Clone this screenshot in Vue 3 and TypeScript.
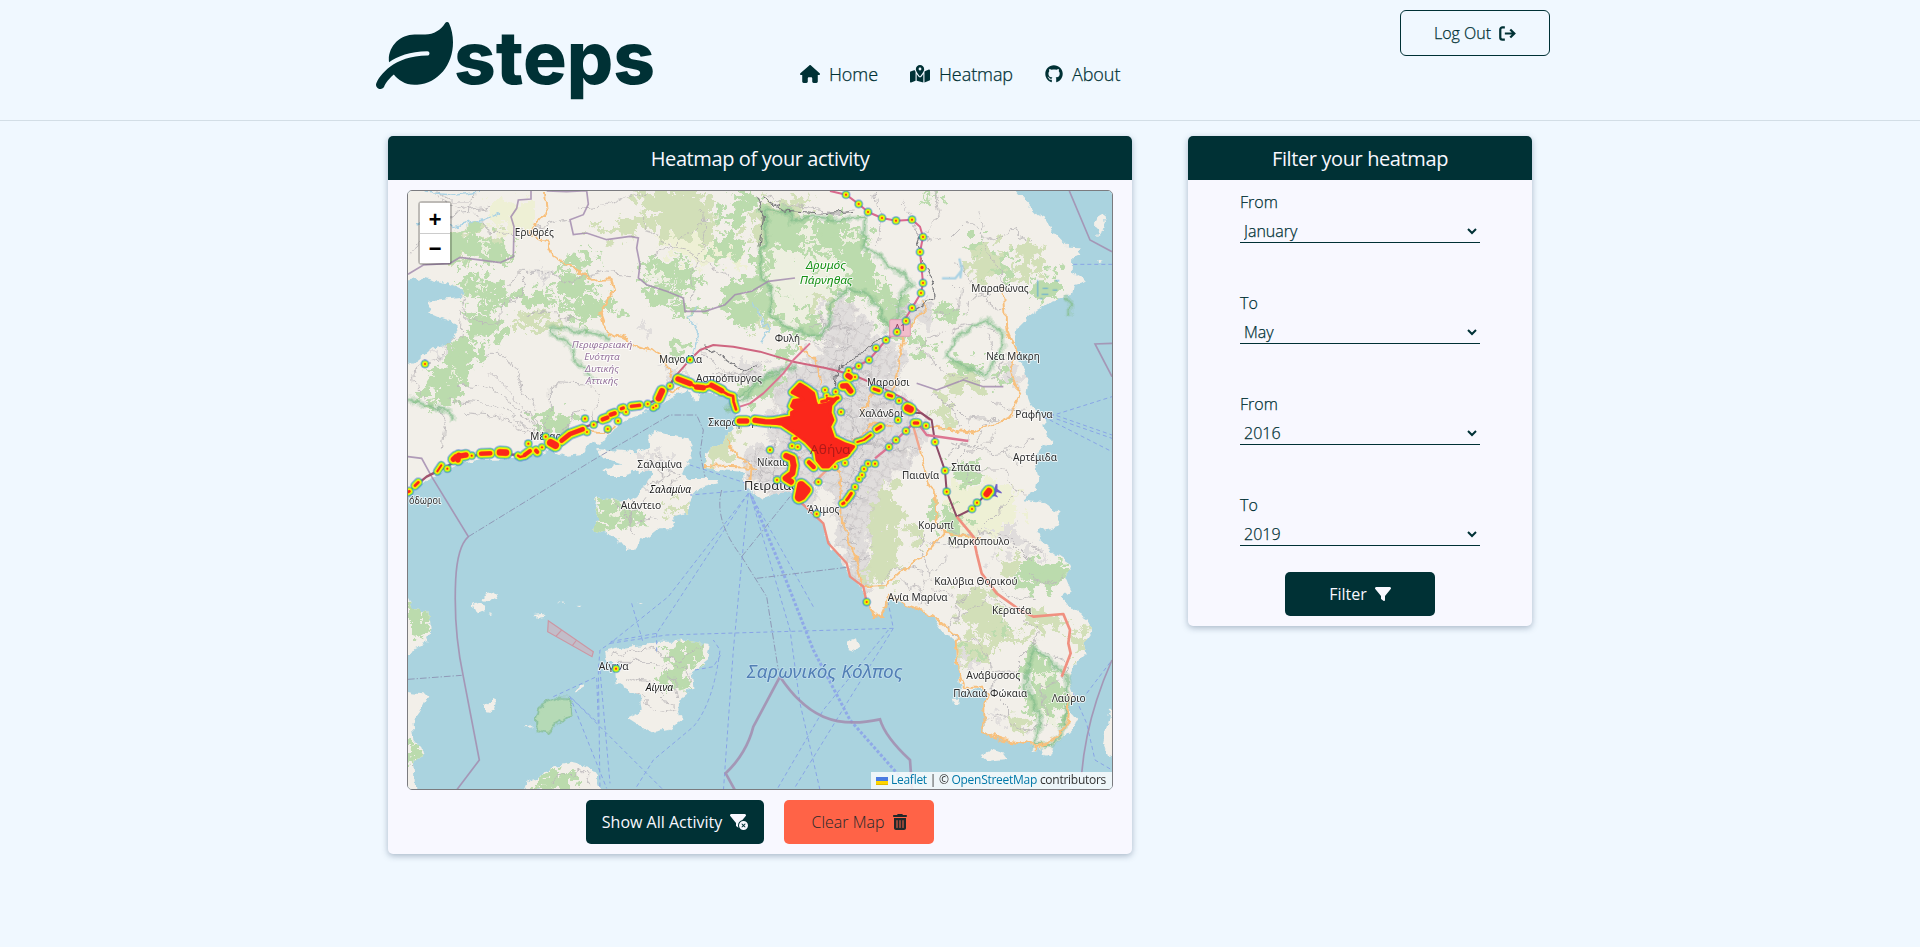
<script setup lang="ts">
import { ref } from 'vue'

interface Heat { d: string; w: number; fill?: boolean }
interface Place { t: string; x: number; y: number; w: number; s?: number; c?: string }

const months = ['January', 'February', 'March', 'April', 'May', 'June', 'July', 'August', 'September', 'October', 'November', 'December']
const years = ['2015', '2016', '2017', '2018', '2019', '2020']
const filters = ref([
  { label: 'From', value: 'January', options: months },
  { label: 'To', value: 'May', options: months },
  { label: 'From', value: '2016', options: years },
  { label: 'To', value: '2019', options: years },
])

/* Map units: three per screen pixel. */
const mainland = 'M60 160H1890L1910 183 1945 225 1972 255 2000 270 2025 310 2050 335 2065 350 2105 352 2100 375 2080 385 2078 420 2090 440 2118 455 2085 465 2078 495 2055 500 2010 515 1975 540 1940 565 1910 595 1903 630 1910 680 1930 715 1945 750 1940 790 1955 830 1990 865 2000 915 2015 935 1985 955 1965 980 1975 1050 1970 1080 1925 1110 1990 1120 2035 1150 2040 1185 1970 1205 1980 1230 2025 1270 2070 1300 2055 1345 2070 1380 2045 1400 2080 1440 2128 1470 2130 1510 2110 1540 2120 1570 2080 1610 2065 1650 2080 1690 2070 1740 2095 1770 2075 1800 2040 1825 2010 1850 1960 1860 1940 1840 1870 1830 1815 1810 1810 1720 1825 1680 1790 1675 1745 1685 1730 1600 1730 1530 1700 1520 1660 1460 1610 1435 1580 1425 1525 1410 1505 1455 1480 1458 1455 1410 1450 1370 1405 1335 1395 1305 1350 1250 1330 1190 1305 1155 1260 1115 1230 1085 1190 1090 1150 1110 1100 1075 1090 1050 1090 1025 1020 1020 975 1010 975 970 1025 940 1060 885 1070 850 1055 810 1020 795 965 788 948 812 920 785 870 800 830 830 780 855 740 870 700 895 660 945 630 935 605 975 560 980 510 960 460 980 400 985 310 987 240 1000 190 1025 140 1050 110 1070 60 1095V715L120 690 160 655 215 640 235 600 232 580 185 565 150 550 160 535 145 512 240 500 252 485 200 460 130 443 60 455Z'

const islands = [
  /* Salamis */
  'M805 915L825 903 870 915 925 930 940 960 915 1010 905 1035 930 1050 1010 1050 1015 1060 955 1075 935 1095 925 1150 870 1165 885 1180 880 1195 835 1195 810 1215 780 1230 770 1255 740 1260 720 1235 700 1220 640 1200 645 1180 660 1165 645 1140 650 1100 700 1112 750 1110 785 1090 800 1060 820 1030 790 1020 735 1035 685 1035 670 1020 730 1005 670 985 645 960 720 965 770 970 810 945Z',
  /* Aegina */
  'M675 1565L720 1555 790 1545 840 1535 920 1535 992 1545 985 1590 960 1610 935 1630 940 1670 900 1700 895 1735 905 1770 865 1800 815 1810 785 1790 745 1765 785 1745 780 1700 745 1680 710 1660 705 1620 720 1605 680 1590Z',
  'M430 1980L440 1955 470 1945 490 1920 530 1910 580 1900 625 1910 650 1945 665 1985Z',
  'M60 1400L85 1405 100 1440 145 1445 150 1510 140 1540 110 1550 90 1575 60 1575Z',
  'M60 1680L100 1690 145 1695 120 1745 95 1780 100 1830 125 1860 130 1880 100 1890 105 1930 110 1990 60 1990Z',
  'M315 1395l35-5 5 10-25 15-20-5zM278 1425l20-8 20 8-8 20-20 5zM322 1455l12-2-4 5zM460 1455l25-3 12 8-25 4zM315 1730l25-20 10 5-5 20-15 8-15-3zM585 1680l20-14 3 8-20 12zM438 1790l16-6v9zM770 1418l25 3-10 4zM590 1428l14-1-5 5zM538 1417l12 1-4 4z',
  'M2155 260l18-10 5 30-10 20-20 15 5-20-12-8 12-10zM2152 388l14 5-12 5z',
  'M1405 1530l25-8 8 30-15 12-20-8zM1715 1700l22 0-2 20-15 0zM1805 1875l35-15 25 10 15 20-50 5zM2020 1330l22 5-5 20-20-2zM1990 1855l30-5-10 25-14-2zM2190 1740l15-5v150l-20-10-15-40z',
]

const scrub = [
  'M760 183H1000L985 240 1010 290 960 330 880 330 850 310 830 270 790 270Z', 'M630 295l80-10 50-25 40 0-10 40-100 30z',
  'M225 300l90-10 80 40-10 50-120 20-40-30z', 'M150 340l90-5 60 40-20 20-110-15z', 'M380 575l60-15 90 5 20 15-60 20-90 0z',
  'M1140 210l130-10 30 25-60 40-90-20z', 'M1110 260h80l20 60-60 30-50-20z', 'M1140 490l150-20 60 40-70 60-80-20z',
  'M1780 360l80-15 20 50-40 60-80-20zM1915 350l60-10 15 50-50 60-40-20z', 'M1690 745l70-20 60 20-30 40-70 0z',
  'M1680 790h35l5 50-20 55-25-30z', 'M1470 1080l70-20 20 90-15 160-40 70-50-10 25-130-50-60z', 'M1420 1030l70-10 60 80-50 60-60-30z',
  'M1560 1175l30-5 50 40-20 30-45-10z', 'M1740 1400l50-30 100 60-30 70 80 10 25 30-50 10-120-30-50-40z', 'M1735 1530l110 5-20 60-50 20-45-20z',
  'M1870 1285l25-10 25 15-8 45-30 15-15-25z', 'M1895 1750l35 5 10 40-30 30-15-30z', 'M1930 1450l90-5 55 30-40 25-100-10z',
  'M1060 470l120-10 20 80-60 60-90-50z', 'M970 920l90-20 10 40-30 50-60 30z', 'M865 1120l70-15 0 45-60 5z', 'M2070 1510l50-20 5 70-45 20z',
]

const woods = [
  'M200 310l90-15 100 50-10 50-100 5-90-30z', 'M220 445l90-15 70 50 5 30-80 0-70-30z', 'M360 490l120-15 60 25-20 30-110-5z',
  'M520 440l40-20 50 30 70 20-60 20-80-5z', 'M540 510l90-15 90 30-40 25-100-10z', 'M260 520l70-15 40 30-60 20zM250 570l70-20 60 50-20 40-70-15z',
  'M190 640l70-15 60 30-20 30-100 10z', 'M230 680l30-10 5 60-30 80-60 20-50-10 40-100z', 'M84 600l40-10 30 30-60 20z',
  'M540 400l60-15 50 20-40 30zM575 370l30-5 20 30-30 10zM640 370l50-10-10 30zM520 530l50 40 70 10-20-40z', 'M770 410l80-20 90 20 30 60-60 15-70-25z',
  'M780 460l60 0 70 40-20 25-80-15z', 'M850 640l60-10 20 30-50 10zM860 540l80-20 50 20-60 20z', 'M1000 250l60-20 50 10-30 40-70 10z',
  'M990 330l50-20 60 30-30 40-60 10z', 'M1030 470l90-40 60 50-10 60-70 60-80-50z', 'M1050 190l60-10 20 60-50 10z',
  'M465 850h120l-10 50-50 30-60-30z', 'M1150 240l80-5 60 40 60-10 110 20 0 80 20 40 60 80 60 20 5 90-40 30-60-20-10-70-60-50-60 20-100-60-70 30-60-60z',
  'M1130 350l60-15 50 50-20 60 70 70-20 40-60-30-80-50z', 'M1150 530l100-5 80 60-10 40-90-10-60-50z', 'M1350 270l100 5 20 60-60 20-70-20z',
  'M1200 440l50 30 60 0-30 50-50-10z', 'M1960 440l70-10 20 60-90 30z', 'M1590 620l60 5 20 40-70 0z', 'M1650 550l60-25 30 30-50 30zM1780 330l40 0 0 30-40 10zM1620 190l60 5-20 20z',
  'M1690 700l60-20 60 30-60 20z', 'M1840 740l40-10 5 30-50 5z', 'M1850 380l30-10 20 60-50 10z', 'M1930 1290l70 10 60-10 10 60-60 20-90-20z', 'M1900 1340l70 20 60-5-20 20-100 0z',
  'M1935 1580l50-25 20 60 40 40 20 60-20 50-50-10-30 30-30-70 10-60z', 'M1960 1680l40-5 20 30-40 20z', 'M1840 1470l30-3 10 30-20 10z', 'M1750 1560l50 0-20 25z',
  'M1300 1290l15-30 20 10-20 30z', 'M1710 1010l80-10 10 50-80 15z', 'M1650 1120l60 10 60 50-40 30-60-10z', 'M1190 640l60 10-20 40-50-10z', 'M1090 740l90-20 40 20-60 60-80 15z',
  /* islands */
  'M650 1115l70-5 30 20 20 30 20 30-50 10-30-20-30 30-45 0 20-50z', 'M840 1550l70-10 70 5-10 50-60 30 10 40-50-10-40-40 60-20z', 'M850 1640l50 0 20 30-50 20z', 'M500 1920l80-15 10 50-20 30-110 0z', 'M84 1420l40 10 20 80-30 20-30-20z', 'M84 1830l40 30-10 60-30-10z', 'M2125 1330l6-10zM700 1760l20-14 5 10-25 20z',
]

/* Open ground between the woods. */
const clearings = [
  'M1180 350l60 10 60 60 60-10 60 30-20 40-60-10-50 50-70-20-60-60z', 'M1250 290l60 5 20 30-60 10z', 'M1180 480l60 30 50 50-30 30-60-20-40-50z', 'M1380 310l50 0 20 30-50 10z', 'M1480 440l30 20 10 40-30-10z', 'M1270 350l80 10 40 50-60 10z',
  'M270 330l60 5 20 20-50 5zM270 460l40 5 10 20-40 0zM220 725l20 0-20 40z', 'M800 420l40 0 20 30-30 5zM1080 480l40 10-10 40-40-10z', 'M1960 1620l40 0 10 40-40 10zM1990 1720l30 20-10 40-30-10z', 'M690 1150l30-15 20 20-20 20z',
]

const farmland = [
  'M330 220l80-10 60 20-20 60-70 30-50-40z', 'M830 320l100-10 110 50-60 50-80-20z', 'M1680 1140l130-90 80 10 50 90-110 90-90-20z', 'M1690 1060l60-10 20 40-60 30z', 'M1020 355l60-10 20 40-50 20z',
]

const urban = [
  'M1340 520l70-10 40 60 60 60 50 20 20 60-60 60-50 20-70-20-60-60-10-90z', 'M1200 720l160-50 120 20 80 90 40 70 20 90-40 70-80 60-30 90 20 100-80-60-50-80-60-100-80-60-60-60z',
  'M1090 960l140-30 80 60 0 120-120 0-90-40z', 'M1370 1150l50 10 40 120 10 110-60-60-40-90z', 'M1540 520l120-5-10 60-70 20z', 'M1090 690l80 10 10 40-90 20z',
  'M780 960l70 10 20 40-60 10zM470 425l50 10-10 20-50-5zM850 700l40 5 20 50-40-20zM780 590l25-10 8 20-20 15z', 'M1860 700l50 0 20 50-50 5z',
  'M1820 1200l100 0 50 60 30 20-80-10-70-40z', 'M1830 1280l30-5-10 20-25-5z', 'M140 670l60-30 10 30-50 15zM1740 1590l60-10 10 30-60 10zM1820 1745l50 20-20 10z', 'M1610 850l60 30-30 40-50-30z',
]

const thinRoads = [
  'M84 370l60-50 50-60 80-10 5-70M280 240l60 80 60-10 50-20M160 200l80 40 90-20', 'M470 290l80-20 20-10', 'M600 240l70-10 70-30 60-10', 'M780 260l60 80 80 20 90 60 50 20M960 240l10 60-10 80-20 60-15 80M820 380l60-20 50-60 50-40',
  'M370 470l60-40 90 0 60 30 90-30 80 10M440 450l-20 60-60 10 0 60-100-5M260 575l-10-60-20-30M440 550l80 0 80 20', 'M245 550l-5 60-60 50-80 60 10 60 60 50 30 60-10 60', 'M330 730l40 40 60 60 70 90M240 760l80 5 60 50 80 60 40 40M200 810l120 10 120 60 50 40M505 920V770l30-15 90 5 30 40-20 50-10 50M560 900l20-40 40-20M250 850l100 10 80 30 50 30M330 690l0-20 40 0 50 80 70 160',
  'M970 650l60 70 40 20 60-10M1020 740l100 0 20-50', 'M1150 190l60 40 160 15 60-5', 'M1480 183l20 60-10 100M1600 280l30 30 40-40-10-60 40-60M1700 340l60-60 80 40 60-20 60 30M1800 250l20 100 60 120M1570 210l50 100 60 20M1870 540l-80-60-60-80M1870 470l-90 30-20 60M1700 440l40 40-10 60-60 10M1860 620l-80-40-60 20',
  'M1620 660l90 80 80 20 60-20 30-60M1700 800l60 60 100 10M1770 860v80l-60 20M1830 860l-40 80-60 60 40 60M1660 790l60 40 20 60M1850 900l-60 60-80-30M1960 930l-90 30-100 10M1870 960l60 60M1780 1020l100 0 40 80M1900 1090l-50 60-60 60-80 0',
  'M1640 1200l-20 60 30 80 80 30M1790 1200l100 30 60 60M1610 1210l60 40 90 0M1700 1280l-60 60-20 80M1730 1480l10-60 40-60 40-10M1830 1340l60 50 60 20M1920 1430l-40 0-60-20-40 20-60 40-20 30M1700 1490l30 30 60 10 40 40 20 60-20 60M1920 1470l50 40-10 40-60 60-50 10M1840 1600l-10 80 60 60-60 20M1660 1370l60 30M1560 1340l60 40 20 50M1500 1350l60-40 60 20M2000 1560l60 30-20 60-50 20 10 80M1900 1780l40 20 60-20',
  'M1280 720l120-10 100 40M1280 740l60 180 60 40M1340 700l60 160M1240 720l60 120 100 20 100-20M1310 780l180 50 80-10M1390 820l60 110 80 30 90-10M1440 760l-30 100 10 140-20 100M1510 780l-60 130-60 90M1560 860l-90 70-40 90M1350 900l120 40 80-10M1380 1000l70 30-10 60-50 80M1360 1060l50 0 40 60M1380 1120l60 10M1370 1190l60 10M1390 1240l50 0M1400 1290l60-10',
  'M1310 540l20 80 60 30M1340 580l80 20 60-30M1360 660l70-20M1350 530l60 80-20 60M1290 600l100-20M1270 640l90 10',
  'M1100 980l160 30M1130 950l20 140M1100 1020l110 20M1180 950l0 130M1210 950l20 130M1110 1060l120-10', 'M780 930l60 50 60 70M770 1080l60 0 70-20M800 1060l80-30M800 990l70 50M690 1110l60 50 50-60M760 1110l-10 100M830 1170l-60 10',
  'M700 1580l100-30 100 40 70-50M720 1600l90 0 100 20 20 40M730 1640l80 20 70 80M820 1600l60 50 10 60M770 1700l60 40 60 10', 'M540 1940l60-20 30 40M520 1980l20-40', 'M84 1920l60 60', 'M1060 870l60-10M1000 730l120 5M1030 760l80-40', 'M160 183l60 30 50 0M500 450l10-10', 'M1700 600l-90 60M1920 750l-60-30-30-90', 'M1930 830l-60 10-40-30', 'M1950 1330l40 30 60-30M1930 1240l60 20',
]

const orangeRoads = [
  'M495 183L500 250 470 285 445 300 470 325 500 335 520 375 580 415 635 452 690 448 700 480 680 515 660 555 680 612 730 625 770 645 815 660 850 690 880 740', 'M885 740L870 790 910 770 940 775',
  'M700 885L680 910 620 905', 'M1040 930L1075 980 1115 1010 1110 1060M975 1005L1110 1010 1130 1020', 'M1870 470L1880 600 1905 660 1895 720 1920 800 1890 860 1780 910 1660 893 1600 885', 'M1375 1000L1390 1180 1430 1290 1450 1368 1520 1365 1580 1310 1640 1270 1690 1205 1800 1225', 'M1620 960L1635 1020 1665 1090 1670 1170 1690 1205', 'M1260 655L1310 690 1325 770', 'M1630 510l5 40-60 50-20 100-20 110M1440 860l50-80M1420 940l60-60 60 10', 'M1450 1390L1480 1458 1505 1455 1530 1400 1580 1425 1610 1435 1660 1460 1730 1520 1735 1620 1750 1670 1810 1670 1825 1700 1810 1720V1810L1870 1830 1940 1840 1970 1855 2030 1820 2065 1770 2068 1700',
]

const motorways = [
  { d: 'M1350 183L1398 194 1436 222 1464 246 1506 264 1548 272 1596 269 1620 290 1629 321 1620 366 1629 459 1623 489 1596 534 1551 606 1518 630 1467 690 1406 722', c: '#d9688c', w: 6 },
  { d: 'M885 740L930 689 960 660 1000 645 1060 650 1140 665 1240 695 1340 715 1420 735 1500 770 1570 805 1650 870', c: '#cf6580', w: 6 },
  { d: 'M1290 640L1240 690 1210 730 1150 790 1110 820 1080 830', c: '#dc7592', w: 6 },
  { d: 'M84 1085L140 1040 200 1010 240 985 320 970 420 975 500 950 560 910 640 882 720 845 800 822 850 800 885 740', c: '#a0536e', w: 7 },
  { d: 'M1575 845L1625 850 1655 870 1665 936 1695 1022 1700 1085 1730 1160 1776 1137 1820 1090', c: '#8d4b66', w: 6 },
  { d: 'M1606 870L1640 915 1765 933M1485 985L1527 951 1600 880', c: '#dc7592', w: 7 },
  { d: 'M1730 1160L1780 1220 1790 1270 1805 1330 1850 1390 1920 1440 1960 1460 2050 1452 2070 1500 2065 1540 2072 1570 2045 1640', c: '#f09080', w: 8 },
  { d: 'M1260 1115L1330 1180 1345 1240 1400 1300 1410 1340 1450 1370 1460 1416', c: '#ee8d7f', w: 7 },
  { d: 'M1600 890L1620 960M1300 1060L1350 1010M1260 980L1230 1010', c: '#f1a48c', w: 7 },
]

const reserves = [
  'M1155 240L1235 245 1230 275 1300 260 1360 270 1455 265 1450 350 1490 370 1540 420 1575 430 1595 465 1560 490 1560 560 1520 590 1500 540 1460 490 1400 480 1350 520 1350 580 1310 620 1220 590 1170 550 1180 500 1140 420 1140 370 1160 330Z',
  'M1700 680L1730 620 1780 590 1820 570 1870 610 1870 650 1840 700 1820 735 1780 720 1740 700Z',
  'M1965 1555L2000 1580 2060 1640 2065 1720 2045 1810 2010 1845 1960 1845 1980 1780 1965 1720 1940 1680 1945 1600Z',
  'M505 600L520 590 600 605 650 610 690 630M505 600l70 50 10 40 60 60M84 805l50 20 80 20 5 30', 'M1030 840l60-30 80-80 80-20M1080 800l60-50 60-20', 'M2055 500l15 20-2 40',
]

const boundaries = [
  'M453 183V207L415 210 410 235 393 260 402 290 400 380 360 398 240 382 210 400 130 405 84 433', 'M500 183l60 2 60-3 5 40-15 32-40 15 10 45 40-5 60 20 70-10 25 5-5 30 10 50-5 40 25 20 60 20 50 20 5 40h60l60-20 30-30 50-10 50-30 80-10',
  'M84 980L125 985 155 1040 265 1220Q232 1250 227 1350Q220 1500 250 1640L298 1890 230 1980', 'M2068 183L2130 330 2196 365', 'M2196 640L2145 642 2196 740', 'M2196 1590Q2120 1760 2105 1930', 'M1670 780l80-30 60 20 60 0M1670 780l-60-20',
]
const ferries = [
  'M1105 1090L865 1400 690 1540 660 1560 655 1620 660 1985M1105 1090L830 1510 690 1535M1105 1090L1060 1560 1030 1985', 'M1110 1090L1230 1500 1260 1720 1320 1980M1110 1090L1300 1430', 'M690 1540L860 1515 1540 1495 1525 1420M1540 1495L1400 1720 1240 1980M1525 1500L1330 1740 1190 1980', 'M520 1700L650 1640 655 1780 570 1700 680 1975M570 1700L850 1980M660 1620L690 1960', 'M770 1970L820 1890 940 1790Q1000 1720 1020 1560L1000 1530M945 1620L1000 1610 1025 1570', 'M755 1420L790 1540M830 1510V1570M1105 1080L930 1095M1100 1060L930 1005', 'M2080 403H2196M1990 865L2196 800M2010 850L2196 915M2010 860L2196 925M1990 860L2196 965', 'M2080 1690L2120 1780 2145 1890 2196 1920M2120 1690L2196 1590',
]
const seaLines = ['M265 1220L640 990 760 920 870 855 950 855 970 900 960 970 975 1040', 'M84 1648L245 1636', 'M1025 1080Q1000 1170 1085 1280L1160 1400 1195 1620', 'M1085 1280L1230 1100M1130 1345L1400 1312']

const dots: number[][] = [
  [135, 702], [930, 689], [870, 768], [615, 866], [641, 884], [714, 873], [683, 897], [738, 846], [803, 822], [445, 941], [497, 920], [486, 952], [621, 906], [470, 965], [820, 833], [275, 977], [202, 1016],
  [1398, 194], [1436, 222], [1464, 246], [1506, 264], [1548, 272], [1596, 269], [1629, 321], [1620, 366], [1629, 459], [1623, 489], [1596, 534], [1578, 573], [1551, 606], [1518, 630], [1488, 654], [1467, 690], [1436, 708], [1406, 722], [1425, 741],
  [1557, 812], [1383, 846], [1554, 870], [1638, 887], [1665, 936], [1578, 903], [1548, 930], [1527, 951], [1170, 960], [1236, 948], [1253, 951], [1335, 780], [1340, 797], [1367, 785],
  [1485, 1001], [1464, 1001], [1452, 1017], [1446, 1035], [1437, 1047], [1425, 1071], [1395, 999], [1315, 1056], [1191, 1050], [1310, 1152], [1695, 1022], [1700, 1085], [1791, 1118], [1776, 1137], [1460, 1416], [708, 1616], [1365, 1010],
]
const heat: Heat[] = [
  { d: 'M84 1086l4-2M105 1067l10-10', w: 7 }, { d: 'M172 1024l12-18', w: 5 }, { d: 'M220 988l8-8 30-5M236 976l-2 14', w: 15 }, { d: 'M303 971l28-1', w: 12 }, { d: 'M360 967l18 1', w: 19 }, { d: 'M414 977l6 4 15-4', w: 6 }, { d: 'M434 975l16-12M468 962l4 4', w: 11 },
  { d: 'M512 938l14 8', w: 21 }, { d: 'M545 932l25-20 38-14', w: 13 }, { d: 'M668 868l14-5M692 854l12-4', w: 12 }, { d: 'M724 836l6-2M754 829l25-3', w: 9 }, { d: 'M836 805l10-22', w: 17 }, { d: 'M828 828l0 0', w: 5 },
  { d: 'M894 747l36 14M950 771l20 2M995 766l30 16', w: 15 }, { d: 'M930 761l20 10M970 773l25-7M1025 782l20 12 14 4 2 18 7 22', w: 7 }, { d: 'M1078 873h22M1125 871l30 4 50 2', w: 15 },
  { d: 'M1237 787L1260 763 1280 775 1300 790 1306 815 1311 828 1340 822 1370 804 1352 825 1350 848 1358 870 1348 890 1360 925 1395 942 1420 950 1400 975 1366 988 1345 1010 1328 1010 1312 990 1308 965 1280 935 1240 905 1205 882 1175 878 1175 873 1235 862 1235 848 1250 840 1235 828 1242 812 1270 808 1262 800Z', w: 9, fill: true },
  { d: 'M1325 815l15-3M1342 806l22 2 10-4', w: 8 }, { d: 'M1404 737l6 4M1388 768l12-1 12 16', w: 15 }, { d: 'M1482 777l15 5M1525 795l10 3', w: 8 }, { d: 'M1583 834l8 4', w: 20 }, { d: 'M1603 879h10', w: 9 }, { d: 'M1432 936l20-6 20-15', w: 5 }, { d: 'M1490 898l12-8', w: 9 }, { d: 'M1626 412v1', w: 8 }, { d: 'M1243 926l6-2', w: 7 },
  { d: 'M1219 978l18 8 4 20-4 24-20 15 16 10', w: 17 }, { d: 'M1287 997l14 14', w: 12 }, { d: 'M1264 1066l15 14-14 18-8 4z', w: 24, fill: true }, { d: 'M1388 1121l4-2M1400 1110l6-8 8-12', w: 8 }, { d: 'M1820 1092l7-9', w: 18 },
  ...dots.map(([x, y]) => ({ d: `M${x} ${y}h.1`, w: 5 })),
]
const layers = [
  { grow: 23, color: '#3b62d8', opacity: 0.38 },
  { grow: 18, color: '#35c47c', opacity: 0.75 },
  { grow: 13, color: '#b9ed25', opacity: 1 },
  { grow: 8, color: '#fff000', opacity: 1 },
  { grow: 2, color: '#ff8a10', opacity: 1 },
  { grow: 0, color: '#fb271b', opacity: 1 },
]

const towns: Place[] = [
  { t: 'Ερυθρές', x: 463, y: 318, w: 117 }, { t: 'Μαγούλα', x: 902, y: 699, w: 130 }, { t: 'Ασπρόπυργος', x: 1047, y: 757, w: 198 }, { t: 'Μέγαρα', x: 507, y: 930, w: 112 }, { t: 'Σκαραμαγκάς', x: 1080, y: 888, w: 190 },
  { t: 'Φυλή', x: 1222, y: 635, w: 76 }, { t: 'Μαραθώνας', x: 1860, y: 485, w: 172 }, { t: 'Νέα Μάκρη', x: 1899, y: 690, w: 160 }, { t: 'Μαρούσι', x: 1525, y: 768, w: 128 }, { t: 'Χαλάνδρι', x: 1504, y: 860, w: 132 }, { t: 'Ραφήνα', x: 1962, y: 863, w: 112 },
  { t: 'Αρτέμιδα', x: 1965, y: 992, w: 132 }, { t: 'Νίκαια', x: 1178, y: 1008, w: 94 }, { t: 'Σπάτα', x: 1758, y: 1022, w: 88 }, { t: 'Παιανία', x: 1622, y: 1048, w: 112 }, { t: 'Πειραιάς', x: 1172, y: 1080, w: 160, s: 40 },
  { t: 'Άλιμος', x: 1330, y: 1149, w: 96 }, { t: 'Κορωπί', x: 1668, y: 1197, w: 106 }, { t: 'Μαρκόπουλο', x: 1796, y: 1244, w: 186 }, { t: 'Σαλαμίνα', x: 839, y: 1014, w: 134 }, { t: 'Αιάντειο', x: 783, y: 1137, w: 122 }, { t: 'Καλύβια Θορικού', x: 1788, y: 1366, w: 250 },
  { t: 'Αγία Μαρίνα', x: 1613, y: 1412, w: 180 }, { t: 'Κερατέα', x: 1895, y: 1451, w: 118 }, { t: 'Ανάβυσσος', x: 1840, y: 1648, w: 162 }, { t: 'Παλαιά Φώκαια', x: 1831, y: 1700, w: 222 }, { t: 'Λαύριο', x: 2066, y: 1715, w: 102 }, { t: 'Αίγινα', x: 701, y: 1621, w: 90 }, { t: 'όδωροι', x: 135, y: 1123, w: 96 },
]
const slanted: Place[] = [
  { t: 'Δρυμός', x: 1338, y: 418, w: 120, s: 33, c: '#159015' }, { t: 'Πάρνηθας', x: 1338, y: 461, w: 158, s: 33, c: '#159015' },
  { t: 'Περιφερειακή', x: 666, y: 655, w: 182, s: 29, c: '#98769f' }, { t: 'Ενότητα', x: 666, y: 691, w: 106, s: 29, c: '#98769f' }, { t: 'Δυτικής', x: 666, y: 727, w: 102, s: 29, c: '#98769f' }, { t: 'Αττικής', x: 666, y: 762, w: 98, s: 29, c: '#98769f' },
  { t: 'Σαλαμίνα', x: 871, y: 1090, w: 124, s: 30, c: '#111' }, { t: 'Αίγινα', x: 838, y: 1682, w: 82, s: 30, c: '#111' },
]
</script>

<template>
  <div class="page">
    <header class="top">
      <a class="brand">
        <svg class="leaf" viewBox="0 0 576 512" preserveAspectRatio="none"><path d="M546.2 9.7c-5.6-12.5-21.6-13-28.3-1.2C486.9 62.4 431.4 96 368 96h-80C182 96 96 182 96 288c0 7 .8 13.7 1.5 20.5C161.3 262.8 253.4 224 384 224c8.8 0 16 7.2 16 16s-7.2 16-16 16C132.6 256 26 410.1 2.4 468c-6.6 16.3 1.2 34.9 17.5 41.6 16.4 6.8 35-1.1 41.8-17.3 1.5-3.6 20.9-47.9 71.9-90.6 32.4 43.9 94 85.8 174.9 77.2C465.5 467.5 576 326.7 576 154.3c0-50.2-10.8-102.2-29.8-144.6z" /></svg>
        <svg class="word" viewBox="0 0 202 80"><text x="1" y="62" textLength="201" lengthAdjust="spacingAndGlyphs">steps</text></svg>
      </a>
      <nav class="nav">
        <a><svg class="i-home" viewBox="0 0 576 512"><path d="M575.8 255.5c0 18-15 32.1-32 32.1h-32l.7 160.2c0 2.7-.2 5.4-.5 8.1V472c0 22.1-17.9 40-40 40H456c-1.1 0-2.2 0-3.3-.1c-1.4 .1-2.8 .1-4.2 .1H416 392c-22.1 0-40-17.9-40-40V448 384c0-17.7-14.3-32-32-32H256c-17.7 0-32 14.3-32 32v64 24c0 22.1-17.9 40-40 40H160 128.1c-1.5 0-3-.1-4.5-.2c-1.2 .1-2.4 .2-3.6 .2H104c-22.1 0-40-17.9-40-40V360c0-.9 0-1.9 .1-2.8V287.6H32c-18 0-32-14-32-32.1c0-9 3-17 10-24L266.4 8c7-7 15-8 22-8s15 2 21 7L564.8 231.5c8 7 12 15 11 24z" /></svg><span>Home</span></a>
        <a><svg class="i-map" viewBox="0 0 576 512"><path fill-rule="evenodd" d="M408 120c0 54.6-73.1 151.9-105.2 192c-7.7 9.6-22 9.6-29.6 0C241.1 271.9 168 174.6 168 120C168 53.7 221.7 0 288 0s120 53.7 120 120zm8 80.4c3.5-6.9 6.7-13.8 9.6-20.6c.5-1.2 1-2.5 1.5-3.7l116-46.4C558.9 123.4 576 135 576 152V422.8c0 9.8-6 18.6-15.1 22.3L416 503V200.4zM137.6 138.3c2.4 14.1 7.2 28.3 12.8 41.5c2.9 6.8 6.1 13.7 9.6 20.6V451.8L32.9 502.7C17.1 509 0 497.4 0 480.4V209.6c0-9.8 6-18.6 15.1-22.3l122.6-49zM327.8 332c13.9-17.4 35.7-45.7 56.2-77V504.3L192 449.4V255c20.5 31.3 42.3 59.6 56.2 77c20.5 25.6 59.1 25.6 79.6 0zM288 152a40 40 0 1 0 0-80 40 40 0 1 0 0 80z" /></svg><span>Heatmap</span></a>
        <a><svg class="i-git" viewBox="0 0 496 512"><path d="M244.8 8C106.1 8 0 113.3 0 252c0 110.9 69.8 205.8 169.5 239.2 12.8 2.3 17.3-5.6 17.3-12.1 0-6.2-.3-40.4-.3-61.4 0 0-70 15-84.7-29.8 0 0-11.4-29.1-27.8-36.6 0 0-22.9-15.7 1.6-15.4 0 0 24.9 2 38.6 25.8 21.9 38.6 58.6 27.5 72.9 20.9 2.3-16 8.8-27.1 16-33.7-55.9-6.2-112.3-14.3-112.3-110.5 0-27.5 7.6-41.3 23.6-58.9-2.6-6.5-11.1-33.3 2.6-67.9 20.9-6.5 69 27 69 27 20-5.6 41.5-8.5 62.8-8.5s42.8 2.9 62.8 8.5c0 0 48.1-33.6 69-27 13.7 34.7 5.2 61.4 2.6 67.9 16 17.7 25.8 31.5 25.8 58.9 0 96.5-58.9 104.2-114.8 110.5 9.2 7.9 17 22.9 17 46.4 0 33.7-.3 75.4-.3 83.6 0 6.5 4.6 14.4 17.3 12.1C428.2 457.8 496 362.9 496 252 496 113.3 383.5 8 244.8 8z" /></svg><span>About</span></a>
      </nav>
      <button class="btn outline"><span>Log Out</span><svg class="i-out" viewBox="0 0 16 14"><path d="M5.5 1.2H3.2a2 2 0 0 0-2 2v7.6a2 2 0 0 0 2 2h2.3M5.5 7H14M10.6 3.3L14.4 7l-3.8 3.7" fill="none" stroke="currentColor" stroke-width="2.1" /></svg></button>
    </header>

    <main class="main">
      <section class="card map-card">
        <h2>Heatmap of your activity</h2>
        <div class="map">
          <svg class="tiles" viewBox="84 183 2112 1794" preserveAspectRatio="none">
            <defs>
              <filter id="coast" filterUnits="userSpaceOnUse" x="60" y="160" width="2160" height="1840"><feTurbulence type="fractalNoise" baseFrequency=".035" numOctaves="3" seed="4" /><feDisplacementMap in="SourceGraphic" scale="26" xChannelSelector="R" yChannelSelector="G" /></filter>
              <filter id="rough" filterUnits="userSpaceOnUse" x="60" y="160" width="2160" height="1840"><feTurbulence type="fractalNoise" baseFrequency=".03" numOctaves="4" seed="9" /><feDisplacementMap in="SourceGraphic" scale="120" xChannelSelector="R" yChannelSelector="G" /></filter>
              <filter id="wavy" filterUnits="userSpaceOnUse" x="60" y="160" width="2160" height="1840"><feTurbulence type="fractalNoise" baseFrequency=".015" numOctaves="2" seed="2" /><feDisplacementMap in="SourceGraphic" scale="45" xChannelSelector="R" yChannelSelector="G" /></filter>
              <clipPath id="land"><path :d="mainland" /><path v-for="(d, i) in islands" :key="i" :d="d" /></clipPath>
              <pattern id="streets" width="58" height="50" patternUnits="userSpaceOnUse" patternTransform="rotate(28)"><path d="M0 8h58M0 32h36M14 0v50M40 8v42" fill="none" stroke="#c3bfc0" stroke-width="2" /></pattern>
            </defs>
            <rect x="84" y="183" width="2112" height="1794" fill="#aad3df" />
            <g filter="url(#coast)">
              <g fill="#f2efe9"><path :d="mainland" /><path v-for="(d, i) in islands" :key="i" :d="d" /></g>
              <g clip-path="url(#land)">
                <g filter="url(#rough)">
                  <path v-for="(d, i) in farmland" :key="'f' + i" :d="d" fill="#eef0d5" />
                  <path v-for="(d, i) in scrub" :key="'s' + i" :d="d" fill="#d2dfb8" />
                  <path v-for="(d, i) in woods" :key="'w' + i" :d="d" fill="#bbdbad" />
                  <path v-for="(d, i) in clearings" :key="'c' + i" :d="d" fill="#edefe0" />
                  <path v-for="(d, i) in urban" :key="'u' + i" :d="d" fill="#e0dddc" />
                </g>
                <g filter="url(#wavy)">
                  <path v-for="(d, i) in urban.slice(0, 5)" :key="'p' + i" :d="d" fill="url(#streets)" />
                  <path v-for="(d, i) in thinRoads" :key="'t' + i" :d="d" class="thin" />
                </g>
              </g>
            </g>
            <g filter="url(#coast)">
              <path v-for="(d, i) in reserves" :key="'rb' + i" :d="d" class="reserve band" />
              <path v-for="(d, i) in reserves" :key="'r' + i" :d="d" class="reserve" />
              <path class="reserve" d="M480 1730L520 1702 570 1705 577 1750 540 1775 505 1810 470 1800 468 1770Z" fill="#b9dca9" />
            </g>
            <path d="M2026 452h12M1988 475h16M2018 480h14M1985 493h20M1980 506h8M1973 450v50" stroke="#4c9fe0" stroke-width="2.5" />
            <path d="M1738 385l8 35-20 25-40 0M1746 405l-5 40" stroke="#a9d2e4" stroke-width="7" fill="none" />
            <path d="M140 183l80 10 80-10M110 285l60-20 50 25 90-20 50-20M950 530l-20 30 25 50-20 80M1120 520l20 40 30 40-30 40" stroke="#a9d2e4" stroke-width="4" fill="none" filter="url(#coast)" />
            <g filter="url(#coast)">
              <path v-for="(d, i) in orangeRoads" :key="i" :d="d" class="orange" />
              <path d="M1150 200l60 40 130 10 80-5M1550 600l-50 30-130 90-10 110M970 650l60 30 60 45 40-20M1605 540l60-40-5-40-50-110 10-30M1130 200l20 60-10 90" class="rail" />
            </g>
            <path v-for="(d, i) in ferries" :key="'fe' + i" :d="d" class="ferry" />
            <path v-for="(d, i) in seaLines" :key="'sl' + i" :d="d" class="sea-line" />
            <path d="M1115 1100L1210 1330 1300 1560 1410 1770 1560 1940" fill="none" stroke="#8fa9e8" stroke-width="9" stroke-dasharray="9 6" />
            <path d="M505 1472L640 1565 636 1580 503 1505ZM545 1500l-18 20M590 1530l-14 18" fill="#d9a7b3" fill-opacity=".5" stroke="#cc96a3" stroke-width="3.5" />
            <path v-for="(d, i) in boundaries" :key="'b' + i" :d="d" class="boundary" />
            <path class="boundary thick" d="M1070 1990L1037 1930Q1100 1870 1120 1790L1200 1640Q1260 1730 1330 1760T1500 1768Q1515 1820 1590 1890L1597 1990" />
            <path v-for="(m, i) in motorways" :key="'m' + i" :d="m.d" fill="none" :stroke="m.c" :stroke-width="m.w" stroke-linejoin="round" />
            <rect x="1529" y="569" width="62" height="50" rx="4" fill="#f1bccb" stroke="#dd9eb0" stroke-width="3" /><text x="1560" y="604" textLength="34" text-anchor="middle" font-size="29" fill="#8a3556">A1</text>
            <path d="M1845 1062l5 0 2 14 14 8v4l-15-3-1 8 6 5v3l-9-2-9 2v-3l6-5-1-8-13 3v-4l13-8z" fill="#7161c4" transform="rotate(8 1845 1080)" />
            <g class="label">
              <text v-for="p in towns" :key="p.t + p.x" :x="p.x" :y="p.y" :textLength="p.w" :font-size="p.s || 31" lengthAdjust="spacingAndGlyphs">{{ p.t }}</text>
            </g>
            <g class="label slant">
              <text v-for="p in slanted" :key="p.t + p.x" :x="p.x" :y="p.y" :textLength="p.w" :font-size="p.s" :fill="p.c" lengthAdjust="spacingAndGlyphs">{{ p.t }}</text>
              <text x="1334" y="1643" font-size="54" textLength="468" lengthAdjust="spacingAndGlyphs" class="gulf">Σαρωνικός Κόλπος</text>
            </g>
            <g class="heat">
              <g v-for="(l, i) in layers" :key="i" :opacity="l.opacity">
                <path v-for="(h, j) in heat" :key="j" :d="h.d" :stroke="l.color" :stroke-width="h.w + l.grow" :fill="h.fill ? l.color : 'none'" />
              </g>
            </g>
            <text x="1351" y="973" font-size="40" textLength="122" lengthAdjust="spacingAndGlyphs" text-anchor="middle" fill="#a01818" opacity=".8">Αθήνα</text>
          </svg>
          <div class="zoom"><button>+</button><button>−</button></div>
          <div class="credit"><svg viewBox="0 0 12 8"><path fill="#4C7BE1" d="M0 0h12v4H0z" /><path fill="#FFD500" d="M0 4h12v3H0z" /><path fill="#E0BC00" d="M0 7h12v1H0z" /></svg><span><a>Leaflet</a> | © <a>OpenStreetMap</a> contributors</span></div>
        </div>
        <div class="actions">
          <button class="btn dark broad"><span>Show All Activity</span><svg class="i-fx" viewBox="0 0 576 512"><path fill-rule="evenodd" d="M3.9 22.9C10.5 8.9 24.5 0 40 0H472c15.5 0 29.5 8.9 36.1 22.9s4.6 30.5-5.2 42.5L396.4 195.6C316.2 212.1 256 283 256 368c0 27.4 6.3 53.4 17.5 76.5c-1.6-.8-3.2-1.8-4.7-2.9l-64-48c-8.1-6-12.8-15.5-12.8-25.6V288.9L9 65.3C-.7 53.4-2.8 36.8 3.9 22.9zM432 224a144 144 0 1 1 0 288 144 144 0 1 1 0-288zm59.3 107.3c6.2-6.2 6.2-16.4 0-22.6s-16.4-6.2-22.6 0L432 345.4l-36.7-36.7c-6.2-6.2-16.4-6.2-22.6 0s-6.2 16.4 0 22.6L409.4 368l-36.7 36.7c-6.2 6.2-6.2 16.4 0 22.6s16.4 6.2 22.6 0L432 390.6l36.7 36.7c6.2 6.2 16.4 6.2 22.6 0s6.2-16.4 0-22.6L454.6 368l36.7-36.7z" /></svg></button>
          <button class="btn red"><span>Clear Map</span><svg class="i-bin" viewBox="0 0 448 512"><path fill-rule="evenodd" d="M135.2 17.7C140.6 6.8 151.7 0 163.8 0H284.2c12.1 0 23.2 6.8 28.6 17.7L320 32h96c17.7 0 32 14.3 32 32s-14.3 32-32 32H32C14.3 96 0 81.7 0 64S14.3 32 32 32h96zM32 128H416V448c0 35.3-28.7 64-64 64H96c-35.3 0-64-28.7-64-64zM128 192a16 16 0 0 0-16 16V432a16 16 0 0 0 32 0V208a16 16 0 0 0-16-16zM224 192a16 16 0 0 0-16 16V432a16 16 0 0 0 32 0V208a16 16 0 0 0-16-16zM320 192a16 16 0 0 0-16 16V432a16 16 0 0 0 32 0V208a16 16 0 0 0-16-16z" /></svg></button>
        </div>
      </section>

      <section class="card filter-card">
        <h2>Filter your heatmap</h2>
        <form class="fields">
          <label v-for="(f, i) in filters" :key="i" class="field">
            <span>{{ f.label }}</span>
            <select v-model="f.value"><option v-for="o in f.options" :key="o">{{ o }}</option></select>
          </label>
        </form>
        <div class="submit"><button class="btn dark"><span>Filter</span><svg class="i-f" viewBox="0 0 512 512"><path d="M3.9 54.9C10.5 40.9 24.5 32 40 32H472c15.5 0 29.5 8.9 36.1 22.9s4.6 30.5-5.2 42.5L320 320.9V448c0 12.1-6.8 23.2-17.7 28.6s-23.8 4.3-33.5-3l-64-48c-8.1-6-12.8-15.5-12.8-25.6V320.9L9 97.3C-.7 85.4-2.8 68.8 3.9 54.9z" /></svg></button></div>
      </section>
    </main>
  </div>
</template>

<style>
body { background: #f0f8ff; }
</style>

<style scoped>
* { box-sizing: border-box; }
.page { min-height: 947px; background: #f0f8ff; color: #003135; font-family: "Open Sans", "Noto Sans", sans-serif; font-weight: 300; font-size: 16px; }
svg { display: block; flex: none; fill: currentColor; }
.top { display: grid; grid-template-columns: 424px 600px 150px; height: 121px; padding-left: 376px; border-bottom: 1px solid #d3dee6; }
.brand { display: flex; padding-top: 22px; }
.leaf { width: 77px; height: 67px; }
.word { width: 202px; height: 80px; overflow: visible; }
.word text { font: 800 73px Inter, sans-serif; }
.nav { display: flex; padding-top: 59px; height: 90px; }
.nav a { display: flex; align-items: center; height: 30px; font-size: 18px; letter-spacing: -0.08px; gap: 9px; }
.nav a:nth-child(1) { width: 110px; }
.nav a:nth-child(2) { width: 135px; }
.nav span, .outline span, .field span, select { -webkit-text-stroke: .25px currentColor; }
.i-home, .i-map { width: 20px; height: 18px; }
.i-git { width: 18px; height: 18px; }
.btn { display: flex; align-items: center; justify-content: center; gap: 8px; width: 150px; height: 44px; padding: 0; border: 0; border-radius: 5px; font: inherit; color: inherit; }
.outline { margin-top: 10px; height: 46px; background: transparent; border: 1px solid #003135; border-radius: 6px; }
.i-out { width: 17px; height: 15px; }
.main { display: flex; align-items: flex-start; gap: 56px; padding: 15px 0 0 388px; }
.card { background: #f8f8ff; border-radius: 5px; box-shadow: 0 2px 6px rgba(40, 70, 100, .35); overflow: hidden; }
.map-card { width: 744px; height: 718px; }
.filter-card { width: 344px; height: 490px; }
h2 { margin: 0; height: 44px; padding-top: 1px; line-height: 44px; text-align: center; background: #003135; color: #f8f8ff; font-size: 20px; font-weight: 400; letter-spacing: -0.39px; }
.map { position: relative; width: 706px; height: 600px; margin: 10px 19px 0; border: 1px solid #7b7b7f; border-radius: 5px; overflow: hidden; }
.tiles { width: 100%; height: 100%; font-family: "Noto Sans", sans-serif; font-weight: 400; }
.thin { fill: none; stroke: #bbb7b9; stroke-width: 2.6; }
.orange { fill: none; stroke: #f8c07d; stroke-width: 6; stroke-linejoin: round; }
.rail { fill: none; stroke: #77777a; stroke-width: 3.5; }
.ferry { fill: none; stroke: #88a4e6; stroke-width: 3; stroke-dasharray: 12 9; }
.sea-line { fill: none; stroke: #8d94b4; stroke-width: 2.8; stroke-dasharray: 20 6 4 6; }
.boundary { fill: none; stroke: #a38caf; stroke-width: 5; opacity: .85; }
.boundary.thick { stroke-width: 8; }
.reserve { stroke: #83bd8b; stroke-width: 6; opacity: .75; }
.reserve:not([fill]) { fill: none; }
.reserve.band { stroke-width: 20; opacity: .3; }
.label text { text-anchor: middle; stroke: rgba(255, 255, 255, .75); stroke-width: 6; stroke-linejoin: round; paint-order: stroke; }
.label { fill: #2c2c2c; }
.slant text { font-style: italic; }
.slant .gulf { fill: #527fb5; stroke-width: 4; stroke: rgba(200, 225, 240, .8); }
.heat path { stroke-linecap: round; stroke-linejoin: round; }
.zoom { position: absolute; left: 10px; top: 10px; border: 2px solid rgba(0, 0, 0, .22); border-radius: 4px; background-clip: padding-box; }
.zoom button { display: block; width: 30px; height: 30px; padding: 0; border: 0; background: #fff; font: 700 22px/28px "Liberation Mono", monospace; color: #000; }
.zoom button:first-child { padding-top: 7px; line-height: 23px; }
.zoom button + button { border-top: 1px solid #ccc; padding-top: 5px; line-height: 24px; }
.credit { position: absolute; right: 0; bottom: 0; display: flex; align-items: center; gap: 3px; width: 241px; height: 17px; padding: 0 5px; background: rgba(255, 255, 255, .8); color: #333; font-size: 12px; line-height: 16px; white-space: nowrap; font-weight: 400; letter-spacing: -0.27px; }
.credit span { margin-top: -1px; }
.credit svg { width: 12px; height: 8px; }
.credit a { color: #0078a8; }
.actions { display: flex; justify-content: center; gap: 20px; padding-top: 10px; }
.dark { background: #003135; color: #f8f8ff; font-weight: 400; }
.broad { width: 178px; }
.red { background: #ff6347; color: #23282a; }
.i-fx { width: 18px; height: 16px; }
.i-bin { width: 14px; height: 16px; }
.i-f { width: 16px; height: 16px; }
.fields { padding: 10px 52px 0; }
.field { display: block; height: 101px; }
.field span { display: block; height: 24px; line-height: 24px; }
select { display: block; width: 240px; height: 24px; margin-top: 5px; padding: 0 1px 0 0; border: 0; border-bottom: 1px solid #003135; border-radius: 0; background: transparent; color: #003135; font: inherit; outline: 0; }
.submit { display: flex; justify-content: center; margin-top: -22px; }
</style>
